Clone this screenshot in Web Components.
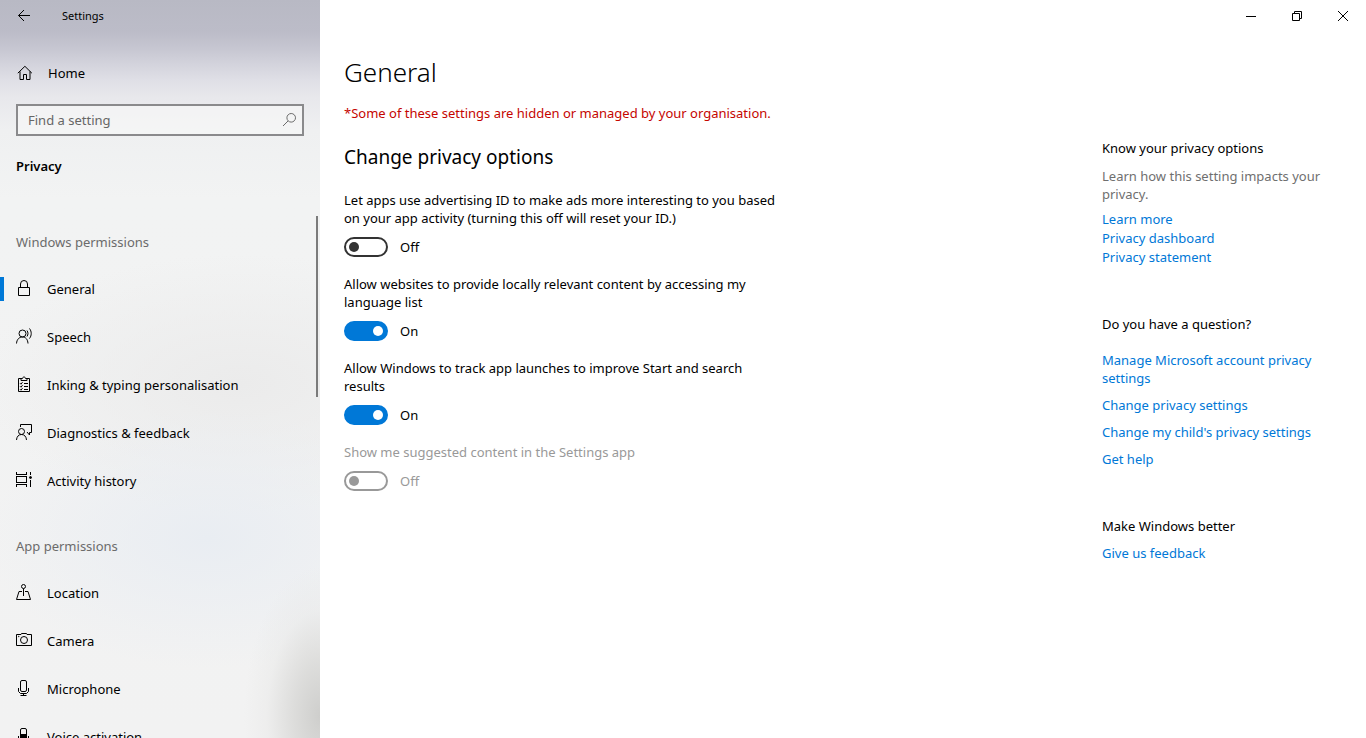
<!DOCTYPE html>
<html lang="en-GB">
<head>
<meta charset="utf-8">
<meta name="viewport" content="width=device-width, initial-scale=1">
<title>Settings</title>
<style>
  body { margin: 0; background: #fff; color: #000; font: 13px/18px "Noto Sans", "Open Sans", sans-serif; }
</style>
</head>
<body>
<settings-window>
  <settings-sidebar slot="sidebar">
    <nav-group heading="Windows permissions">
      <nav-item icon="lock" current>General</nav-item>
      <nav-item icon="speech">Speech</nav-item>
      <nav-item icon="clipboard">Inking &amp; typing personalisation</nav-item>
      <nav-item icon="feedback">Diagnostics &amp; feedback</nav-item>
      <nav-item icon="history">Activity history</nav-item>
    </nav-group>
    <nav-group heading="App permissions">
      <nav-item icon="location">Location</nav-item>
      <nav-item icon="camera">Camera</nav-item>
      <nav-item icon="mic">Microphone</nav-item>
      <nav-item icon="voice">Voice activation</nav-item>
    </nav-group>
  </settings-sidebar>

  <window-controls slot="controls"></window-controls>

  <settings-page slot="page" heading="General" notice="*Some of these settings are hidden or managed by your organisation." section="Change privacy options">
    <toggle-setting>Let apps use advertising ID to make ads more interesting to you based on your app activity (turning this off will reset your ID.)</toggle-setting>
    <toggle-setting checked>Allow websites to provide locally relevant content by accessing my language list</toggle-setting>
    <toggle-setting checked>Allow Windows to track app launches to improve Start and search results</toggle-setting>
    <toggle-setting disabled>Show me suggested content in the Settings app</toggle-setting>
  </settings-page>

  <help-section slot="help" heading="Know your privacy options" compact>
    <span slot="description">Learn how this setting impacts your privacy.</span>
    <help-link>Learn more</help-link>
    <help-link>Privacy dashboard</help-link>
    <help-link>Privacy statement</help-link>
  </help-section>
  <help-section slot="help" heading="Do you have a question?" spaced>
    <help-link>Manage Microsoft account privacy settings</help-link>
    <help-link>Change privacy settings</help-link>
    <help-link>Change my child's privacy settings</help-link>
    <help-link>Get help</help-link>
  </help-section>
  <help-section slot="help" heading="Make Windows better">
    <help-link>Give us feedback</help-link>
  </help-section>
</settings-window>

<script>
const ICONS = {
  back: '<path d="M14 7.5H2.500M8 2 2.500 7.500 8 13"/>',
  home: '<path d="M1.800 8.200 8.900 1.300l7 6.900M4 6.400v8.100h3.500v-5h3v5H14V6.400"/>',
  search: '<circle cx="10.200" cy="5.800" r="4.300"/><path d="M7 9 2 14"/>',
  lock: '<path d="M2.5 7.5h11v8h-11zM4.5 7V4a3.5 3.5 0 0 1 7 0v3"/>',
  speech: '<circle cx="6.5" cy="5.5" r="3.5"/><path d="M.5 15.5c.3-4 2.600-6.500 6-6.500s5.200 2.500 5.500 6.500M11 2.500c1.300 2 1.300 4 0 6M13.500.500c2.300 3 2.300 7 0 10"/>',
  clipboard: '<path d="M5 2.5H2.5v13h11v-13H11M5 4.5v-2h1.5c0-2 3-2 3 0H11v2zM8 7.5h4M8 10.5h4M8 13.5h4M4 7.2l1 1 1.500-2M4 10.200l1 1 1.500-2M4 13.200l1 1 1.500-2"/>',
  feedback: '<path d="M4.5 3V.5h11v8h-2v2.500L11 8"/><circle cx="5.500" cy="7.500" r="3"/><path d="M.5 16c.2-3.500 2.200-5.500 5-5.500s4.800 2 5 5.500"/>',
  history: '<path shape-rendering="crispEdges" d="M.5 0v2.500h10V0M.5 4.500h10v6H.5zM.5 15v-2.500h10V15M14.500 0v3M14.500 8v7"/><circle cx="14.500" cy="5.500" r="1" fill="currentColor"/>',
  location: '<circle cx="7.500" cy="2.500" r="2"/><path d="M7.500 4.500V12M6 7.500H3l-2.500 8h14l-2.500-8H9"/>',
  camera: '<path d="M.5 2.500H5l.5-1h5l.5 1h4.500v11H.5z"/><circle cx="8" cy="8" r="3.500"/><circle cx="2.800" cy="4.500" r=".3"/>',
  mic: '<rect x="4.500" y=".5" width="6" height="11" rx="1.500"/><path d="M2.500 8v3.500l2 2h6l2-2V8M7.500 13.500v2M4.500 15.500h6"/>',
  voice: '<rect x="4.500" y=".5" width="6" height="11" rx="1.500"/><path fill="currentColor" d="M4.500 6.500h6v5h-6z"/><path d="M2.500 8v3.500l2 2h6l2-2V8M7.500 13.500v2M4.500 15.500h6"/>',
  minimise: '<path d="M3 8.500h10"/>',
  restore: '<path d="M3.500 5.500h7v7h-7zM5.500 5V3.500h7v7H11"/>',
  close: '<path d="m3 3 10 10M13 3 3 13"/>'
};

function define(name, render) {
  customElements.define(name, class extends HTMLElement {
    connectedCallback() {
      if (this.shadowRoot) return;
      const template = document.createElement('template');
      template.innerHTML = render(this);
      this.attachShadow({ mode: 'open' }).append(template.content.cloneNode(true));
      this.wire();
    }
    wire() {
      const box = this.shadowRoot.querySelector('input[type=checkbox]');
      const state = this.shadowRoot.querySelector('.state');
      if (box && state) box.addEventListener('change', () => { state.textContent = box.checked ? 'On' : 'Off'; });
    }
  });
}

define('line-icon', el => `
  <style>
    :host { display: block; flex: none; width: 16px; height: 16px; }
    svg { display: block; overflow: visible; fill: none; stroke: currentColor; }
  </style>
  <svg width="16" height="16" viewBox="0 0 16 16" aria-hidden="true">${ICONS[el.getAttribute('name')]}</svg>`);

define('settings-window', () => `
  <style>
    :host { display: grid; grid-template-columns: 320px minmax(0, 1fr); height: 100vh; overflow: hidden; }
    .body { display: flex; flex-direction: column; min-width: 0; }
    .columns { flex: 1; min-height: 0; overflow: auto; display: flex; justify-content: space-between; gap: 32px; padding: 22px 24px 0; }
    aside { flex: none; width: 240px; padding-top: 85px; display: flex; flex-direction: column; gap: 49px; }
  </style>
  <slot name="sidebar"></slot>
  <div class="body">
    <slot name="controls"></slot>
    <div class="columns">
      <slot name="page"></slot>
      <aside><slot name="help"></slot></aside>
    </div>
  </div>`);

define('window-controls', () => `
  <style>
    :host { display: flex; justify-content: flex-end; height: 32px; }
    button { display: grid; place-items: center; width: 46px; padding: 0; border: 0; background: none; color: #000; }
  </style>
  <button aria-label="Minimise"><line-icon name="minimise"></line-icon></button>
  <button aria-label="Restore"><line-icon name="restore"></line-icon></button>
  <button aria-label="Close"><line-icon name="close"></line-icon></button>`);

define('settings-sidebar', () => `
  <style>
    :host {
      display: flex; flex-direction: column; min-height: 0; overflow: hidden;
      background:
        radial-gradient(ellipse 76px 150px at 100% 97%, #cececc, #d6d6d4c0 35%, #e6e6e560 70%, #f1f1f100),
        radial-gradient(ellipse 220px 130px at 65% 73%, #e9edf2, #e9edf200),
        radial-gradient(ellipse 260px 130px at 75% 52%, #ebebeb, #ebebeb00),
        linear-gradient(#b8b9c4, #bcbcc8 32px, #c6c6d1 48px, #d3d3dc 64px, #dfdfe6 80px, #e8e8ec 98px, #eff0f1 130px, #f2f3f3 200px, #f2f2f2);
    }
    .title { display: flex; align-items: center; height: 32px; font-size: 11px; }
    .title button { display: grid; place-items: center; width: 48px; height: 32px; padding: 0; border: 0; background: none; color: #000; }
    .title span { padding-left: 14px; }
    .home { display: flex; align-items: center; gap: 16px; height: 48px; margin-top: 17px; padding: 0 16px; color: inherit; text-decoration: none; }
    .search { display: flex; align-items: center; box-sizing: border-box; height: 32px; margin: 7px 16px 0; padding: 0 5px 0 10px; border: 2px solid #8a8a8c; background: #f7f7f7b0; color: #6b6b6b; }
    input { flex: 1; min-width: 0; padding: 0; border: 0; outline: 0; background: none; font: inherit; color: #000; }
    input::placeholder { color: #666; opacity: 1; }
    h2 { margin: 21px 16px 0; font-size: 13px; line-height: 18px; font-weight: 600; }
    .scroller { flex: 1; min-height: 0; margin-top: 26px; display: flex; justify-content: space-between; overflow: hidden; }
    nav { flex: 1; min-width: 0; }
    .thumb { flex: none; width: 2px; height: 181px; margin: 15px 2px 0 0; background: #7b7b7b; }
  </style>
  <div class="title"><button aria-label="Back"><line-icon name="back"></line-icon></button><span>Settings</span></div>
  <a class="home" href="#home"><line-icon name="home"></line-icon>Home</a>
  <label class="search"><input type="text" placeholder="Find a setting" aria-label="Find a setting"><line-icon name="search"></line-icon></label>
  <h2>Privacy</h2>
  <div class="scroller"><nav aria-label="Privacy"><slot></slot></nav><div class="thumb"></div></div>`);

define('nav-group', el => `
  <style>
    :host { display: block; }
    h3 { margin: 0; height: 32px; padding: 32px 16px 0; font-size: 13px; line-height: 18px; font-weight: 400; color: #6b6b6b; }
  </style>
  <h3>${el.getAttribute('heading')}</h3>
  <slot></slot>`);

define('nav-item', el => `
  <style>
    :host { display: block; }
    a { display: flex; align-items: center; height: 48px; color: #000; text-decoration: none; }
    a::before { content: ""; width: 4px; height: 24px; margin-right: 12px; }
    :host([current]) a::before { background: #0078d7; }
    line-icon { margin-right: 15px; padding-bottom: 2px; }
  </style>
  <a href="#${el.getAttribute('icon')}" ${el.hasAttribute('current') ? 'aria-current="page"' : ''}><line-icon name="${el.getAttribute('icon')}"></line-icon><slot></slot></a>`);

define('settings-page', el => `
  <style>
    :host { display: block; flex: 0 1 440px; min-width: 0; }
    h1 { margin: 0; font-size: 26px; line-height: 36px; font-weight: 300; }
    p { margin: 14px 0 0; color: #c50500; }
    h2 { margin: 21px 0 20px; font-size: 19px; line-height: 28px; font-weight: 400; }
    .settings { display: flex; flex-direction: column; gap: 18px; }
  </style>
  <h1>${el.getAttribute('heading')}</h1>
  <p>${el.getAttribute('notice')}</p>
  <h2>${el.getAttribute('section')}</h2>
  <div class="settings"><slot></slot></div>`);

define('toggle-setting', el => {
  const checked = el.hasAttribute('checked');
  return `
  <style>
    :host { display: block; }
    label { display: flex; flex-direction: column; gap: 10px; }
    .row { display: flex; align-items: center; gap: 12px; height: 20px; }
    input { appearance: none; display: flex; align-items: center; box-sizing: border-box; width: 44px; height: 20px; margin: 0; padding: 0 3px; border: 2px solid #333; border-radius: 10px; }
    input::before { content: ""; width: 10px; height: 10px; border-radius: 50%; background: #333; }
    input:checked { justify-content: flex-end; border-color: #0078d7; background: #0078d7; }
    input:checked::before { background: #fff; }
    :host([disabled]) { color: #999; }
    :host([disabled]) input { border-color: #999; }
    :host([disabled]) input::before { background: #999; }
  </style>
  <label>
    <slot></slot>
    <span class="row"><input type="checkbox" role="switch" ${checked ? 'checked' : ''} ${el.hasAttribute('disabled') ? 'disabled' : ''}><span class="state">${checked ? 'On' : 'Off'}</span></span>
  </label>`;
});

define('help-section', el => `
  <style>
    :host { display: block; }
    h2 { margin: 0; font-size: 13px; line-height: 18px; font-weight: 400; }
    ::slotted([slot=description]) { display: block; margin-top: 10px; color: #6f6f6f; }
    .links { display: flex; flex-direction: column; gap: 9px; margin-top: 9px; }
    :host([compact]) .links { gap: 1px; margin-top: 7px; }
    :host([spaced]) .links { margin-top: 18px; }
  </style>
  <h2>${el.getAttribute('heading')}</h2>
  <slot name="description"></slot>
  <div class="links"><slot></slot></div>`);

define('help-link', el => `
  <style>
    :host { display: block; }
    a { color: #0078d7; text-decoration: none; }
  </style>
  <a href="#${el.textContent.trim().toLowerCase().replace(/[^a-z]+/g, '-')}"><slot></slot></a>`);
</script>
</body>
</html>
